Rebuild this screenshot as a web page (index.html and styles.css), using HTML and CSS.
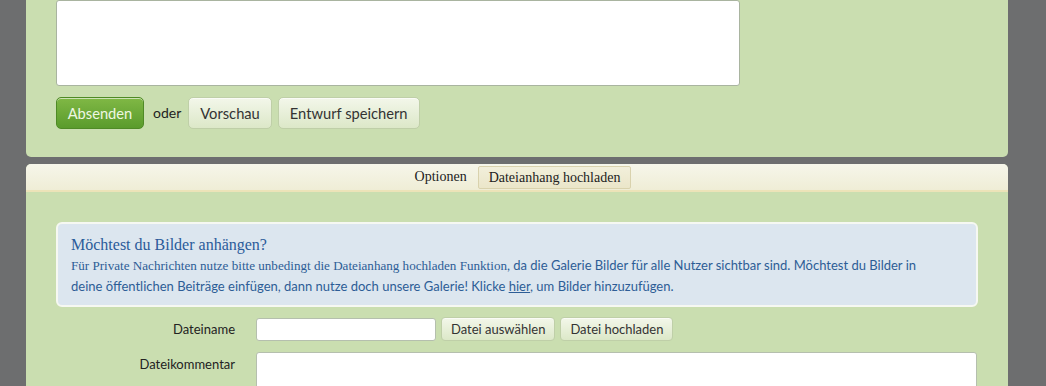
FILE: index.html
```html
<!DOCTYPE html>
<html lang="de">
<head>
<meta charset="utf-8">
<title>Beitrag</title>
<link rel="stylesheet" href="styles.css">
</head>
<body>
<div class="page">
  <section class="panel panel-top">
    <textarea class="editor"></textarea>
    <div class="actions">
      <button class="btn btn-primary">Absenden</button>
      <span class="or">oder</span>
      <button class="btn">Vorschau</button>
      <button class="btn">Entwurf speichern</button>
    </div>
  </section>
  <section class="panel panel-bottom">
    <nav class="tabs">
      <span class="tab">Optionen</span>
      <span class="tab tab-active">Dateianhang hochladen</span>
    </nav>
    <div class="panel-body">
      <div class="notice">
        <h3 class="notice-title">Möchtest du Bilder anhängen?</h3>
        <p class="notice-text"><span class="serif">Für Private Nachrichten nutze bitte unbedingt die Dateianhang hochladen Funktion</span>, da die Galerie Bilder für alle Nutzer sichtbar sind. Möchtest du Bilder in<br>deine öffentlichen Beiträge einfügen, dann nutze doch unsere Galerie! Klicke <a href="#" class="link">hier</a>, um Bilder hinzuzufügen.</p>
      </div>
      <div class="form">
        <label class="label">Dateiname</label>
        <div class="field-row">
          <input class="input" type="text">
          <button class="btn btn-small">Datei auswählen</button>
          <button class="btn btn-small">Datei hochladen</button>
        </div>
        <label class="label label-top">Dateikommentar</label>
        <textarea class="comment"></textarea>
      </div>
    </div>
  </section>
</div>
</body>
</html>
```

FILE: styles.css
```css
* { box-sizing: border-box; }
html, body { margin: 0; padding: 0; }
body {
  background: #6d6e6f;
  height: 386px;
  overflow: hidden;
  font-family: Lato, "Open Sans", sans-serif;
  color: #222;
}
.page {
  padding: 0 38px 0 26px;
  margin-top: -20px;
  display: flex;
  flex-direction: column;
  gap: 7px;
}
.panel {
  background: #cadeb0;
  border-radius: 5px;
}
.panel-top {
  padding: 20px 30px 28px;
}
.editor {
  display: block;
  width: 684px;
  height: 86px;
  border: 1px solid #a9b4a0;
  border-radius: 3px;
  background: #fff;
  resize: none;
  margin: 0;
}
.actions {
  display: flex;
  align-items: center;
  gap: 6px;
  margin-top: 11px;
}
.or {
  font-size: 14px;
  margin: 0 1px 2px 3px;
}
.btn {
  font-family: Lato, "Open Sans", sans-serif;
  font-size: 14.7px;
  height: 32px;
  padding: 0 11px;
  border: 1px solid #bfcfa8;
  border-radius: 5px;
  background: linear-gradient(#f3f7ea, #dce8c8);
  color: #333;
  box-shadow: inset 0 1px 0 rgba(255,255,255,0.6);
}
.btn-primary {
  background: linear-gradient(#80b845, #5a9b2c);
  border-color: #4f8a26;
  color: #eef7e2;
  width: 88px;
  padding: 0;
}
.panel-bottom {
  overflow: hidden;
  height: 240px;
}
.tabs {
  height: 28px;
  background: linear-gradient(#f6f6ea, #efedd6);
  border-bottom: 2px solid #ece3b8;
  display: flex;
  justify-content: center;
  align-items: center;
  gap: 3px;
  padding-left: 4px;
  font-family: "Liberation Serif", serif;
  font-size: 14px;
  color: #222;
}
.tab {
  padding: 2px 8px;
}
.tab-active {
  border: 1px solid #d9d2ad;
  border-radius: 2px;
  background: linear-gradient(#f2efdb, #ebe6c9);
  padding: 2px 10px 2px 10px;
  height: 23px;
  line-height: 18px;
}
.panel-body {
  padding: 30px 30px 0 30px;
}
.notice {
  background: #dce6ef;
  border: 2px solid #f6f8f2;
  border-radius: 6px;
  padding: 11px 13px 8px;
  color: #2d5d96;
}
.notice-title {
  margin: 0;
  font-family: "Liberation Serif", serif;
  font-weight: normal;
  font-size: 16px;
  line-height: 20px;
  color: #2b5b9a;
}
.notice-text {
  margin: 0;
  font-size: 13px;
  line-height: 21px;
  white-space: nowrap;
}
.serif {
  font-family: "Liberation Serif", serif;
  font-size: 13.1px;
}
.link {
  color: #2d5d96;
  text-decoration: underline;
}
.form {
  display: grid;
  grid-template-columns: 179px 1fr;
  column-gap: 21px;
  row-gap: 11px;
  margin-top: 10px;
}
.label {
  text-align: right;
  font-size: 13px;
  align-self: center;
}
.label-top {
  align-self: start;
  padding-top: 4px;
}
.field-row {
  display: flex;
  align-items: center;
  gap: 5px;
}
.input {
  width: 180px;
  height: 23px;
  border: 1px solid #b5bfae;
  border-radius: 3px;
  background: #fff;
  margin: 0;
}
.btn-small {
  height: 24px;
  font-size: 13px;
  padding: 0 9px;
  border-radius: 4px;
}
.comment {
  display: block;
  width: 721px;
  height: 60px;
  border: 1px solid #b5bfae;
  border-radius: 3px;
  background: #fff;
  resize: none;
  margin: 0;
}
```
